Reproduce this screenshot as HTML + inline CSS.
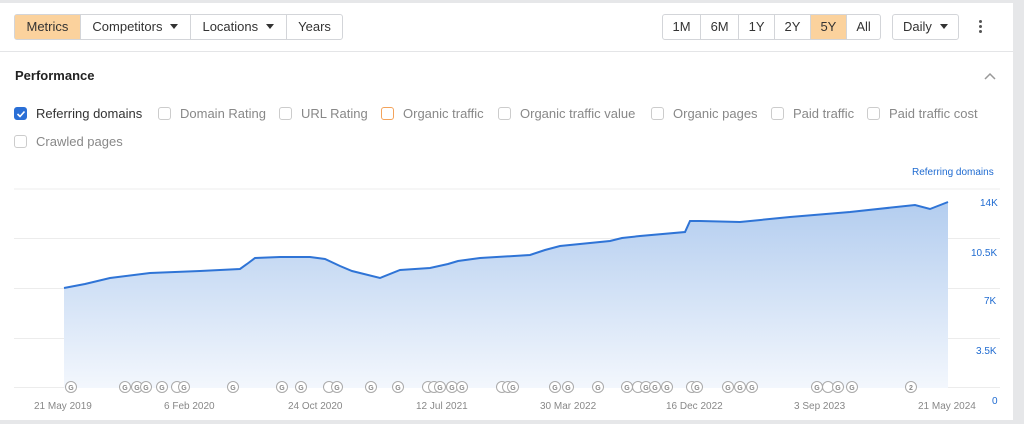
<!DOCTYPE html>
<html><head><style>
body{margin:0;width:1024px;height:424px;background:#e6e7e9;font-family:"Liberation Sans",sans-serif;position:relative;overflow:hidden}
.card{position:absolute;left:0;top:3px;width:1013px;height:417px;background:#fff}
.bg{position:absolute;display:flex;border:1px solid #d3d5d9;border-radius:3px;height:24px;font-size:13px;color:#333}
.bg div{padding:0 10px;line-height:24px;border-right:1px solid #d3d5d9;white-space:nowrap}
.bg div:last-child{border-right:none}
.l div{padding:0 11.5px}
.r div{padding:0 9.5px}
.on{background:#fbd29d}
.tri{display:inline-block;border-left:4px solid transparent;border-right:4px solid transparent;border-top:5px solid #333;margin-left:8px;vertical-align:2px}
.cb{position:absolute;font-size:13px;color:#888;display:flex;align-items:center;white-space:nowrap}
.cb i{display:inline-block;width:11px;height:11px;border:1px solid #ccc;border-radius:3px;margin-right:9px}
.lbl{position:absolute;font-size:10px;color:#1f6bd1}
.dt{position:absolute;font-size:10px;color:#888;top:398px}
</style></head><body>
<div class="card">
<div class="bg l" style="left:14px;top:11px"><div class="on">Metrics</div><div>Competitors<span class="tri"></span></div><div>Locations<span class="tri"></span></div><div>Years</div></div>
<div class="bg r" style="left:662px;top:11px"><div>1M</div><div>6M</div><div>1Y</div><div>2Y</div><div class="on">5Y</div><div>All</div></div>
<div class="bg" style="left:892px;top:11px"><div>Daily<span class="tri"></span></div></div>
<div style="position:absolute;left:979px;top:17px;width:4px">
<div style="width:3px;height:3px;background:#555;border-radius:2px;margin-bottom:2px"></div><div style="width:3px;height:3px;background:#555;border-radius:2px;margin-bottom:2px"></div><div style="width:3px;height:3px;background:#555;border-radius:2px"></div></div>
<div style="position:absolute;left:0;top:48px;width:1013px;border-top:1px solid #e4e5e7"></div>
<div style="position:absolute;left:15px;top:65px;font-size:13px;font-weight:bold;color:#222">Performance</div>
<svg style="position:absolute;left:983px;top:69px" width="14" height="9"><path d="M2 7 L7 2 L12 7" fill="none" stroke="#999" stroke-width="1.5"/></svg>
<div class="cb" style="left:14px;top:103px;color:#333"><i style="background:#2a6fd6;border-color:#2a6fd6;position:relative"><svg style="position:absolute;left:1px;top:1px" width="10" height="10"><path d="M1.5 5 L4 7.5 L8.5 2.5" fill="none" stroke="#fff" stroke-width="1.6"/></svg></i>Referring domains</div>
<div class="cb" style="left:158px;top:103px"><i></i>Domain Rating</div>
<div class="cb" style="left:279px;top:103px"><i></i>URL Rating</div>
<div class="cb" style="left:381px;top:103px"><i style="border-color:#f3a35b"></i>Organic traffic</div>
<div class="cb" style="left:498px;top:103px"><i></i>Organic traffic value</div>
<div class="cb" style="left:651px;top:103px"><i></i>Organic pages</div>
<div class="cb" style="left:771px;top:103px"><i></i>Paid traffic</div>
<div class="cb" style="left:867px;top:103px"><i></i>Paid traffic cost</div>
<div class="cb" style="left:14px;top:131px"><i></i>Crawled pages</div>
<div class="lbl" style="left:912px;top:164px">Referring domains</div>
<div class="lbl" style="left:980px;top:195px">14K</div>
<div class="lbl" style="left:971px;top:245px">10.5K</div>
<div class="lbl" style="left:984px;top:293px">7K</div>
<div class="lbl" style="left:976px;top:343px">3.5K</div>
<div class="lbl" style="left:992px;top:393px">0</div>
<div class="dt" style="left:34px">21 May 2019</div>
<div class="dt" style="left:164px">6 Feb 2020</div>
<div class="dt" style="left:288px">24 Oct 2020</div>
<div class="dt" style="left:416px">12 Jul 2021</div>
<div class="dt" style="left:540px">30 Mar 2022</div>
<div class="dt" style="left:666px">16 Dec 2022</div>
<div class="dt" style="left:794px">3 Sep 2023</div>
<div class="dt" style="left:918px">21 May 2024</div>
</div>
<svg style="position:absolute;left:0;top:0" width="1013" height="424">
<defs><linearGradient id="g" x1="0" y1="0" x2="0" y2="1"><stop offset="0" stop-color="#b3cdef"/><stop offset="1" stop-color="#f3f7fd"/></linearGradient></defs>
<g stroke="#ececec" stroke-width="1"><line x1="14" y1="189" x2="1000" y2="189"/><line x1="14" y1="238.5" x2="1000" y2="238.5"/><line x1="14" y1="288.5" x2="1000" y2="288.5"/><line x1="14" y1="338.5" x2="1000" y2="338.5"/><line x1="14" y1="387.5" x2="1000" y2="387.5"/></g>
<path d="M64 288 L85 284 L110 278 L150 273 L200 271 L240 269 L247 264 L255 258 L280 257 L310 257 L325 259 L340 266 L352 271 L380 278 L400 270 L430 268 L448 264 L458 261 L480 258 L530 255 L545 250 L560 246 L610 241 L622 238 L640 236 L685 232 L690 221 L700 221 L740 222 L790 217 L850 212 L915 205 L930 209 L948 202 L948 388 L64 388 Z" fill="url(#g)"/>
<path d="M64 288 L85 284 L110 278 L150 273 L200 271 L240 269 L247 264 L255 258 L280 257 L310 257 L325 259 L340 266 L352 271 L380 278 L400 270 L430 268 L448 264 L458 261 L480 258 L530 255 L545 250 L560 246 L610 241 L622 238 L640 236 L685 232 L690 221 L700 221 L740 222 L790 217 L850 212 L915 205 L930 209 L948 202" fill="none" stroke="#2f74d6" stroke-width="2"/>
<g fill="#fff" stroke="#aaa">
<circle cx="71" cy="387" r="5.5"/><circle cx="125" cy="387" r="5.5"/><circle cx="137" cy="387" r="5.5"/><circle cx="146" cy="387" r="5.5"/><circle cx="162" cy="387" r="5.5"/><circle cx="177" cy="387" r="5.5"/><circle cx="184" cy="387" r="5.5"/><circle cx="233" cy="387" r="5.5"/><circle cx="282" cy="387" r="5.5"/><circle cx="301" cy="387" r="5.5"/><circle cx="329" cy="387" r="5.5"/><circle cx="337" cy="387" r="5.5"/><circle cx="371" cy="387" r="5.5"/><circle cx="398" cy="387" r="5.5"/><circle cx="428" cy="387" r="5.5"/><circle cx="434" cy="387" r="5.5"/><circle cx="440" cy="387" r="5.5"/><circle cx="452" cy="387" r="5.5"/><circle cx="462" cy="387" r="5.5"/><circle cx="502" cy="387" r="5.5"/><circle cx="508" cy="387" r="5.5"/><circle cx="513" cy="387" r="5.5"/><circle cx="555" cy="387" r="5.5"/><circle cx="568" cy="387" r="5.5"/><circle cx="598" cy="387" r="5.5"/><circle cx="627" cy="387" r="5.5"/><circle cx="638" cy="387" r="5.5"/><circle cx="646" cy="387" r="5.5"/><circle cx="655" cy="387" r="5.5"/><circle cx="667" cy="387" r="5.5"/><circle cx="692" cy="387" r="5.5"/><circle cx="697" cy="387" r="5.5"/><circle cx="728" cy="387" r="5.5"/><circle cx="740" cy="387" r="5.5"/><circle cx="752" cy="387" r="5.5"/><circle cx="817" cy="387" r="5.5"/><circle cx="828" cy="387" r="5.5"/><circle cx="838" cy="387" r="5.5"/><circle cx="852" cy="387" r="5.5"/><circle cx="911" cy="387" r="5.5"/>
</g>
<g font-size="7" fill="#888" text-anchor="middle" font-family="Liberation Sans" font-weight="bold">
<text x="71" y="390">G</text><text x="125" y="390">G</text><text x="137" y="390">G</text><text x="146" y="390">G</text><text x="162" y="390">G</text><text x="184" y="390">G</text><text x="233" y="390">G</text><text x="282" y="390">G</text><text x="301" y="390">G</text><text x="337" y="390">G</text><text x="371" y="390">G</text><text x="398" y="390">G</text><text x="440" y="390">G</text><text x="452" y="390">G</text><text x="462" y="390">G</text><text x="513" y="390">G</text><text x="555" y="390">G</text><text x="568" y="390">G</text><text x="598" y="390">G</text><text x="627" y="390">G</text><text x="646" y="390">G</text><text x="655" y="390">G</text><text x="667" y="390">G</text><text x="697" y="390">G</text><text x="728" y="390">G</text><text x="740" y="390">G</text><text x="752" y="390">G</text><text x="817" y="390">G</text><text x="838" y="390">G</text><text x="852" y="390">G</text><text x="911" y="390">2</text>
</g>
</svg>
</body></html>
